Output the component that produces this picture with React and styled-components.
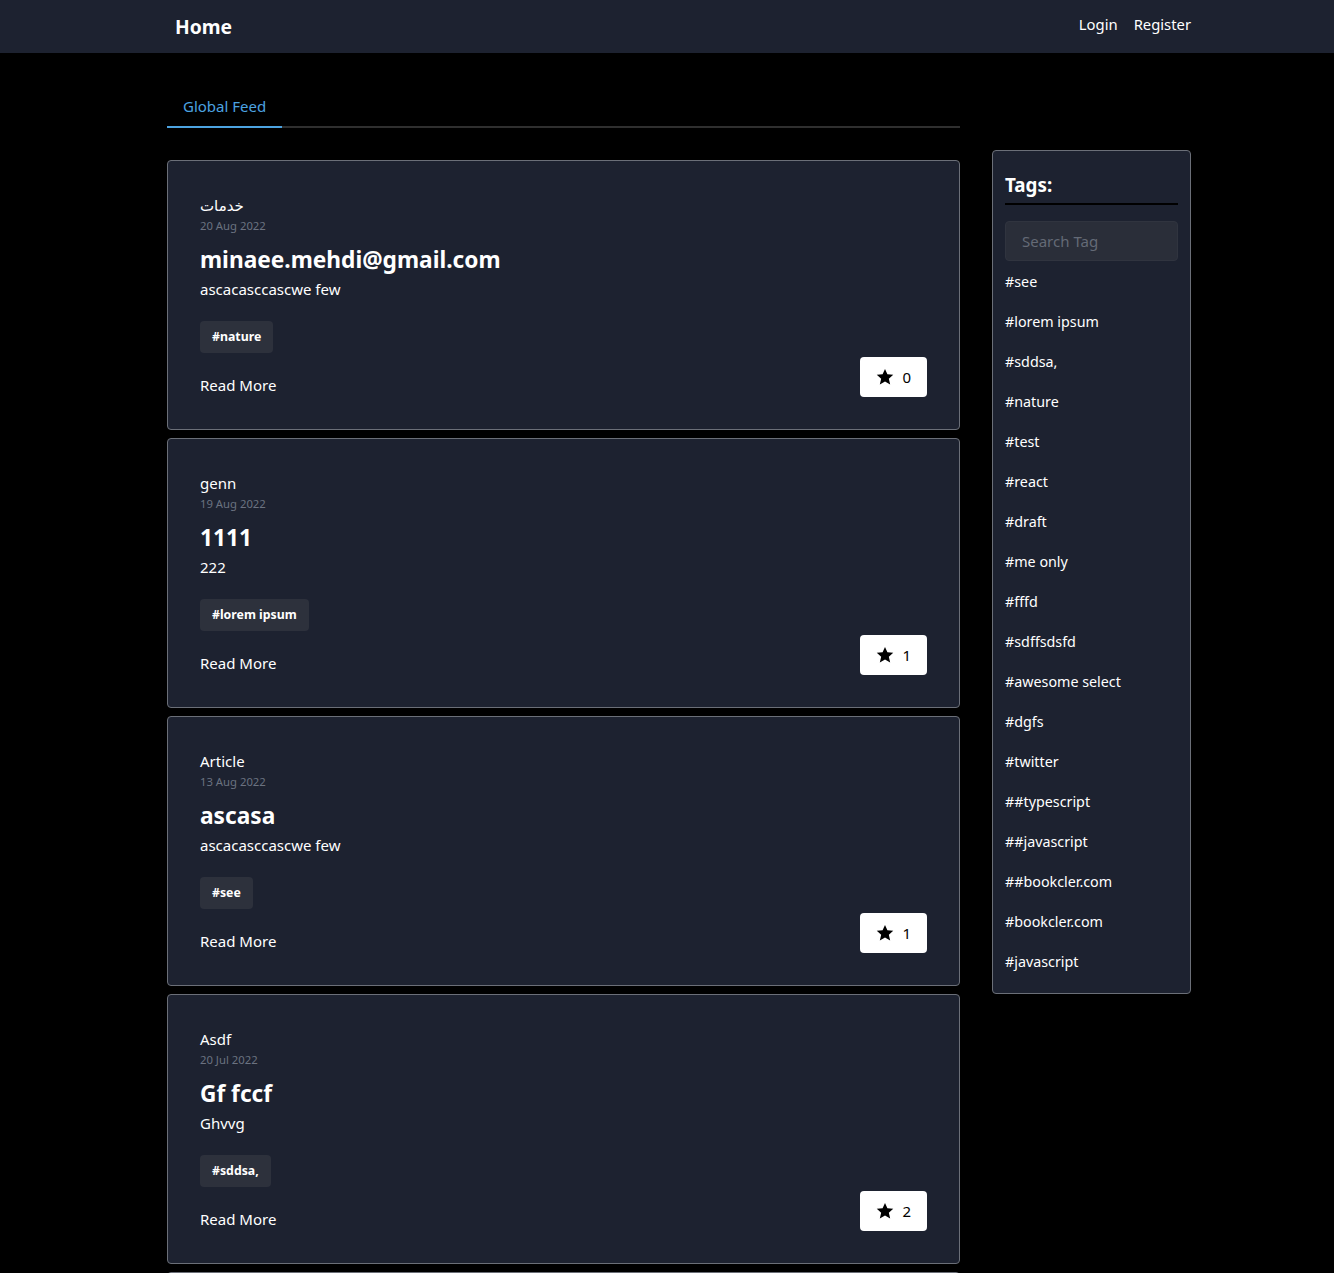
import React from "react";
import styled, { createGlobalStyle } from "styled-components";

const Global = createGlobalStyle`
  * { box-sizing: border-box; }
  html, body { margin: 0; padding: 0; background: #000; }
  body {
    font-family: "Noto Sans", "DejaVu Sans", sans-serif;
    color: #fff;
    font-size: 15px;
    line-height: 24px;
  }
`;

const NavBar = styled.header`
  height: 53px;
  background: #1d2230;
`;

const Container = styled.div`
  width: 1024px;
  margin-left: 167px;
`;

const NavInner = styled(Container)`
  height: 100%;
  display: flex;
  align-items: center;
  justify-content: space-between;
`;

const Brand = styled.a`
  margin-left: 8px;
  font-size: 19.3px;
  font-weight: 700;
  color: #fff;
  text-decoration: none;
`;

const NavLinks = styled.nav`
  display: flex;
  gap: 16px;
  margin-top: -5px;
`;

const NavLink = styled.a`
  color: #fff;
  text-decoration: none;
  font-size: 14.8px;
`;

const Layout = styled(Container)`
  display: grid;
  grid-template-columns: 793px 199px;
  column-gap: 32px;
  align-items: start;
`;

const Main = styled.main`
  padding-top: 33px;
`;

const Tabs = styled.div`
  display: flex;
  border-bottom: 2px solid #2f2f2f;
  margin-bottom: 32px;
`;

const Tab = styled.button`
  background: none;
  border: none;
  padding: 8px 16px;
  margin-bottom: -2px;
  font: inherit;
  font-size: 15px;
  color: ${(p) => (p.$active ? "#4ca3e0" : "#fff")};
  border-bottom: 2px solid ${(p) => (p.$active ? "#4ca3e0" : "transparent")};
`;

const Feed = styled.div`
  display: flex;
  flex-direction: column;
  gap: 8px;
`;

const Card = styled.article`
  background: #1d2230;
  border: 1px solid #6b6f78;
  border-radius: 4px;
  padding: 32px;
`;

const Author = styled.div`
  font-size: 15px;
  line-height: 24px;
`;

const DateText = styled.div`
  font-size: 11.3px;
  line-height: 16px;
  color: #6b7280;
  margin-top: 1px;
`;

const Title = styled.h2`
  margin: 8px 0 0;
  font-size: 22.7px;
  line-height: 36px;
  font-weight: 700;
`;

const Body = styled.p`
  margin: -1px 0 0;
  font-size: 15px;
  line-height: 24px;
`;

const TagRow = styled.div`
  display: flex;
  gap: 8px;
  margin-top: 20px;
`;

const TagPill = styled.span`
  display: inline-block;
  background: #2d313c;
  border-radius: 4px;
  padding: 0 12px;
  height: 32px;
  line-height: 32px;
  font-size: 12.3px;
  font-weight: 700;
`;

const Footer = styled.div`
  display: flex;
  justify-content: space-between;
  align-items: flex-end;
  margin-top: 4px;
`;

const ReadMore = styled.a`
  color: #fff;
  text-decoration: none;
  font-size: 15px;
  line-height: 24px;
`;

const StarButton = styled.button`
  display: flex;
  align-items: center;
  gap: 8px;
  height: 40px;
  padding: 0 16px;
  background: #fff;
  color: #000;
  border: none;
  border-radius: 4px;
  font: inherit;
  font-size: 15px;
`;

const Sidebar = styled.aside`
  margin-top: 97px;
  background: #1d2230;
  border: 1px solid #6b6f78;
  border-radius: 4px;
  padding: 20px 12px 12px;
`;

const SideTitle = styled.h3`
  margin: 0;
  font-size: 18.8px;
  line-height: 28px;
  font-weight: 700;
  padding-bottom: 4px;
  border-bottom: 2px solid #000;
`;

const Search = styled.input`
  display: block;
  width: 100%;
  height: 40px;
  margin-top: 16px;
  background: #2a2e39;
  border: 1px solid #30343f;
  border-radius: 4px;
  padding: 0 16px;
  font: inherit;
  font-size: 15px;
  color: #fff;
  outline: none;
  &::placeholder { color: #646a76; }
`;

const TagList = styled.ul`
  list-style: none;
  margin: 0;
  padding: 0;
`;

const TagItem = styled.li`
  height: 40px;
  line-height: 41px;
  font-size: 14.3px;
`;

const Star = () => (
  <svg width="18" height="18" viewBox="0 0 24 24" fill="#000">
    <path d="M12 1.2l3.2 7.2 7.8.7-5.9 5.2 1.8 7.7L12 18 5.1 22l1.8-7.7L1 9.1l7.8-.7z" />
  </svg>
);

const articles = [
  { author: "خدمات", date: "20 Aug 2022", title: "minaee.mehdi@gmail.com", body: "ascacasccascwe few", tag: "#nature", stars: 0 },
  { author: "genn", date: "19 Aug 2022", title: "1111", body: "222", tag: "#lorem ipsum", stars: 1 },
  { author: "Article", date: "13 Aug 2022", title: "ascasa", body: "ascacasccascwe few", tag: "#see", stars: 1 },
  { author: "Asdf", date: "20 Jul 2022", title: "Gf fccf", body: "Ghvvg", tag: "#sddsa,", stars: 2 },
  { author: "test", date: "18 Jul 2022", title: "test", body: "test", tag: "#test", stars: 0 },
];

const tags = [
  "#see", "#lorem ipsum", "#sddsa,", "#nature", "#test", "#react", "#draft",
  "#me only", "#fffd", "#sdffsdsfd", "#awesome select", "#dgfs", "#twitter",
  "##typescript", "##javascript", "##bookcler.com", "#bookcler.com", "#javascript",
];

export default function App() {
  return (
    <>
      <Global />
      <NavBar>
        <NavInner>
          <Brand href="#">Home</Brand>
          <NavLinks>
            <NavLink href="#">Login</NavLink>
            <NavLink href="#">Register</NavLink>
          </NavLinks>
        </NavInner>
      </NavBar>
      <Layout>
        <Main>
          <Tabs>
            <Tab $active>Global Feed</Tab>
          </Tabs>
          <Feed>
            {articles.map((a, i) => (
              <Card key={i}>
                <Author>{a.author}</Author>
                <DateText>{a.date}</DateText>
                <Title>{a.title}</Title>
                <Body>{a.body}</Body>
                <TagRow>
                  <TagPill>{a.tag}</TagPill>
                </TagRow>
                <Footer>
                  <ReadMore href="#">Read More</ReadMore>
                  <StarButton>
                    <Star />
                    {a.stars}
                  </StarButton>
                </Footer>
              </Card>
            ))}
          </Feed>
        </Main>
        <Sidebar>
          <SideTitle>Tags:</SideTitle>
          <Search placeholder="Search Tag" />
          <TagList>
            {tags.map((t) => (
              <TagItem key={t}>{t}</TagItem>
            ))}
          </TagList>
        </Sidebar>
      </Layout>
    </>
  );
}
